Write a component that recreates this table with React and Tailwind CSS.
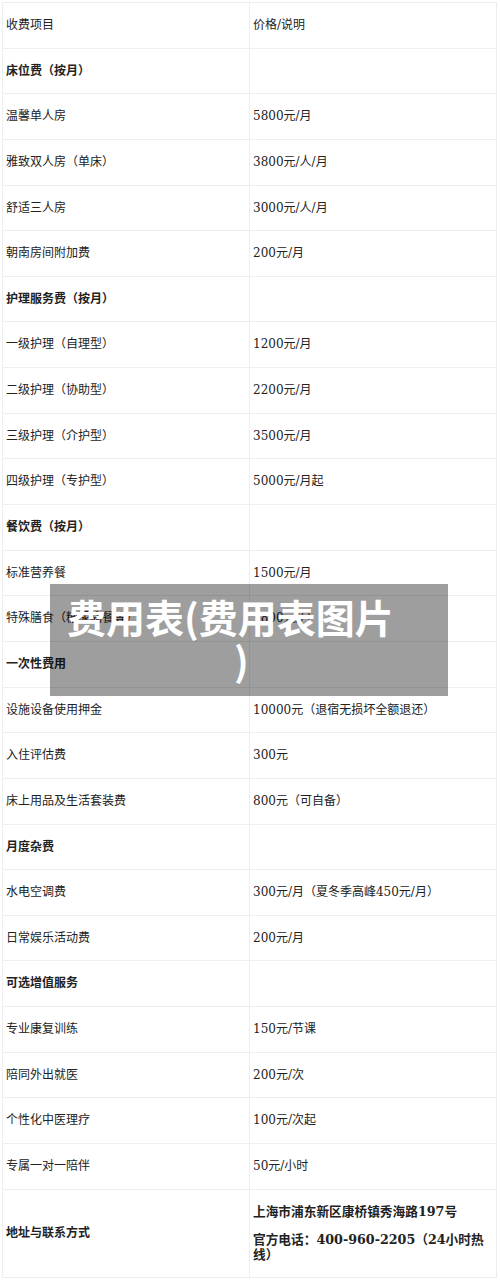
import React from "react";

const rows = [
  { name: "收费项目", price: "价格/说明" },
  { name: "床位费（按月）", head: true },
  { name: "温馨单人房", price: "5800元/月" },
  { name: "雅致双人房（单床）", price: "3800元/人/月" },
  { name: "舒适三人房", price: "3000元/人/月" },
  { name: "朝南房间附加费", price: "200元/月" },
  { name: "护理服务费（按月）", head: true },
  { name: "一级护理（自理型）", price: "1200元/月" },
  { name: "二级护理（协助型）", price: "2200元/月" },
  { name: "三级护理（介护型）", price: "3500元/月" },
  { name: "四级护理（专护型）", price: "5000元/月起" },
  { name: "餐饮费（按月）", head: true },
  { name: "标准营养餐", price: "1500元/月" },
  { name: "特殊膳食（糖尿病餐等）", price: "1800元/月" },
  { name: "一次性费用", head: true },
  { name: "设施设备使用押金", price: "10000元（退宿无损坏全额退还）" },
  { name: "入住评估费", price: "300元" },
  { name: "床上用品及生活套装费", price: "800元（可自备）" },
  { name: "月度杂费", head: true },
  { name: "水电空调费", price: "300元/月（夏冬季高峰450元/月）" },
  { name: "日常娱乐活动费", price: "200元/月" },
  { name: "可选增值服务", head: true },
  { name: "专业康复训练", price: "150元/节课" },
  { name: "陪同外出就医", price: "200元/次" },
  { name: "个性化中医理疗", price: "100元/次起" },
  { name: "专属一对一陪伴", price: "50元/小时" },
];

export default function App() {
  return (
    <div
      className="relative min-h-[1280px] bg-white pl-[2px] pr-[3px] pt-[2px] text-[12px] text-[#222]"
      style={{ fontFamily: '"DejaVu Serif", "Noto Sans CJK SC", serif' }}
    >
      <table className="w-full table-fixed border-collapse">
        <tbody>
          {rows.map((r, i) => (
            <tr key={i}>
              <td
                className={`border border-[#eeeeee] px-[3px] py-[15px] leading-[14.64px] ${
                  r.head ? "font-bold" : ""
                }`}
              >
                {r.name}
              </td>
              <td className="border border-[#eeeeee] px-[3px] py-[15px] leading-[14.64px]">
                {r.price}
              </td>
            </tr>
          ))}
          <tr>
            <td className="border border-[#eeeeee] px-[3px] py-[15px] font-bold leading-[14.64px]">
              地址与联系方式
            </td>
            <td className="border border-[#eeeeee] px-[3px] py-[15px] text-[12.7px] font-bold leading-[14.2px]">
              <p>上海市浦东新区康桥镇秀海路197号</p>
              <p className="mt-[14.6px]">官方电话：400-960-2205（24小时热线）</p>
            </td>
          </tr>
        </tbody>
      </table>

      <div
        className="absolute left-[50px] top-[584px] h-[112px] w-[398px] bg-[rgba(0,0,0,0.38)] pt-[11px] text-[39px] font-bold leading-[43px] text-white"
        style={{ fontFamily: '"Noto Sans CJK SC", sans-serif' }}
      >
        <div className="pl-[17px]">费用表(费用表图片</div>
        <div className="pl-[184px]">)</div>
      </div>
    </div>
  );
}
